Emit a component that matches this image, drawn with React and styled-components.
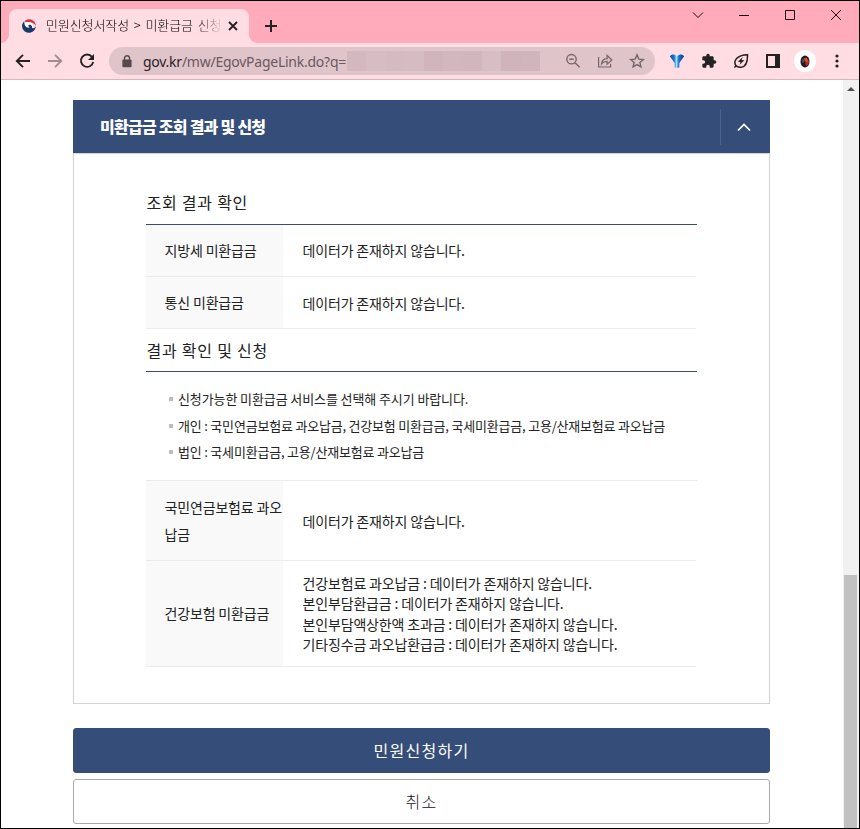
import React, { useState } from "react";
import styled, { createGlobalStyle } from "styled-components";

const localRows = [
  { name: "지방세 미환급금", lines: ["데이터가 존재하지 않습니다."], height: 52, top: 0 },
  { name: "통신 미환급금", lines: ["데이터가 존재하지 않습니다."], height: 52, top: 2 },
];

const notices = [
  { text: "신청가능한 미환급금 서비스를 선택해 주시기 바랍니다.", spacing: -0.1 },
  { text: "개인 : 국민연금보험료 과오납금, 건강보험 미환급금, 국세미환급금, 고용/산재보험료 과오납금", spacing: -0.2 },
  { text: "법인 : 국세미환급금, 고용/산재보험료 과오납금", spacing: -0.2 },
];

const serviceRows = [
  { name: "국민연금보험료 과오납금", lines: ["데이터가 존재하지 않습니다."], height: 80, top: 2 },
  {
    name: "건강보험 미환급금",
    lines: [
      "건강보험료 과오납금 : 데이터가 존재하지 않습니다.",
      "본인부담환급금 : 데이터가 존재하지 않습니다.",
      "본인부담액상한액 초과금 : 데이터가 존재하지 않습니다.",
      "기타징수금 과오납환급금 : 데이터가 존재하지 않습니다.",
    ],
    height: 106,
    top: 0,
  },
];

const mosaic = ["#d3b9bf", "#d6bdc3", "#d4bbc1", "#d5bcc2", "#d0b6bc", "#d2b8be", "#d1b7bd", "#d7bec4", "#cfb4bb", "#d0b6bc"];

function ResultTable({ rows }) {
  return (
    <Table>
      {rows.map((row) => (
        <Row key={row.name} $height={row.height}>
          <RowName>{row.name}</RowName>
          <RowValue $top={row.top}>
            {row.lines.map((line) => (
              <p key={line}>{line}</p>
            ))}
          </RowValue>
        </Row>
      ))}
    </Table>
  );
}

function TabStrip() {
  return (
    <Strip>
      <Tab>
        <svg width="14" height="14" viewBox="0 0 14 14">
          <path d="M3.2 1.600C7-1.200 13.600.8 13.900 6.800C12 4 7.500 2 3 3.600z" fill="#d8324a" />
          <path d="M2.400 2C-1 5-.6 10 2.800 12.600C7.500 15.600 13.600 12.600 13.900 7C13.200 9 11 9.800 10 8.900C10.600 6.800 9 5.200 7.200 5.600C5.500 6 6 8 7.500 8.300C5 9.500 1.500 6.500 2.400 2z" fill="#173a68" />
          <path d="M3 3.600C6 2.400 9.500 3.200 11 5.600C11.300 7 10.800 8.200 10 8.900C10.600 6.800 9 5.200 7.200 5.600C5.600 6 6 8 7.500 8.300C5 9 2.500 6.500 3 3.600z" fill="#fff" />
        </svg>
        <TabTitle>민원신청서작성 &gt; 미환급금 신청</TabTitle>
        <svg width="10" height="10" viewBox="0 0 10 10" stroke="#222" strokeWidth="1.8">
          <path d="M1 1l8 8M9 1L1 9" />
        </svg>
      </Tab>
      <NewTab>
        <svg width="12" height="12" viewBox="0 0 12 12" stroke="#222" strokeWidth="2">
          <path d="M6 0v12M0 6h12" />
        </svg>
      </NewTab>
      <WindowButtons>
        <svg width="12" height="12" viewBox="0 0 12 12"><path d="M1 3.5l5 5 5-5" /></svg>
        <svg width="12" height="12" viewBox="0 0 12 12"><path d="M1 6.5h10" /></svg>
        <svg width="12" height="12" viewBox="0 0 12 12"><path d="M1.5 1.5h9v9h-9z" /></svg>
        <svg width="12" height="12" viewBox="0 0 12 12"><path d="M1 1l10 10M11 1L1 11" /></svg>
      </WindowButtons>
    </Strip>
  );
}

function Toolbar() {
  return (
    <Bar>
      <NavIcons>
        <svg width="16" height="16" viewBox="0 0 16 16" stroke="#222"><path d="M15 8H2M8 1.8L1.8 8 8 14.2" /></svg>
        <svg width="16" height="16" viewBox="0 0 16 16" stroke="#a48d92"><path d="M1 8h13M8 1.8L14.2 8 8 14.2" /></svg>
        <svg width="16" height="16" viewBox="0 0 16 16" stroke="#222">
          <path d="M13 3.8A6.2 6.2 0 1 0 14.2 9" />
          <path d="M15 1v6H9z" fill="#222" stroke="none" />
        </svg>
      </NavIcons>
      <Address>
        <svg width="10" height="13" viewBox="0 0 10 13">
          <path d="M2.5 5V3.3a2.5 2.5 0 0 1 5 0V5" fill="none" stroke="#58494d" strokeWidth="1.4" />
          <rect x=".4" y="4.6" width="9.2" height="7.6" rx="1" fill="#58494d" />
        </svg>
        <Url><b>gov.kr</b>/mw/EgovPageLink.do?q=</Url>
        <Mosaic>
          {mosaic.map((color, i) => (
            <MosaicCell key={i} $color={color} />
          ))}
        </Mosaic>
        <AddressIcons>
          <svg width="16" height="16" viewBox="0 0 16 16"><circle cx="6.5" cy="6.2" r="4.7" /><path d="M10 9.7l4.6 4.6M4.3 6.2h4.4" /></svg>
          <svg width="16" height="16" viewBox="0 0 16 16"><path d="M1.6 4v10h12v-3.2M4.5 10.8c.5-3.7 2.6-5.2 5.6-5.2V2.5l4.8 4.5-4.8 4.2V8.400c-2.700 0-4.200.6-5.600 2.400z" strokeWidth="1.2" /></svg>
          <svg width="16" height="16" viewBox="0 0 16 16"><path d="M8 1.9l1.8 4.2 4.5.4-3.4 3 1 4.4L8 11.6l-3.9 2.3 1-4.4-3.4-3 4.5-.4z" /></svg>
        </AddressIcons>
      </Address>
      <Extensions>
        <svg width="16" height="16" viewBox="0 0 16 16">
          <defs>
            <linearGradient id="gem" x1="0" x2="1">
              <stop offset="0" stopColor="#0d4a98" />
              <stop offset=".3" stopColor="#1676cc" />
              <stop offset=".47" stopColor="#a5e2fc" />
              <stop offset=".62" stopColor="#1873ca" />
              <stop offset="1" stopColor="#08408c" />
            </linearGradient>
          </defs>
          <path d="M.8 3.200Q2.500.8 5 1.600L8 3l3-1.400Q13.500.8 15.200 3.200L10.300 10v4.200q-2.300 1.500-4.600 0V10z" fill="url(#gem)" />
        </svg>
        <svg width="16" height="16" viewBox="0 0 24 24">
          <path fill="#222" d="M20.5 11H19V7c0-1.1-.9-2-2-2h-4V3.5a2.5 2.5 0 0 0-5 0V5H4c-1.1 0-2 .9-2 2v3.8h1.5a2.7 2.7 0 0 1 0 5.4H2V20c0 1.1.9 2 2 2h3.8v-1.5a2.7 2.7 0 0 1 5.4 0V22H17c1.1 0 2-.9 2-2v-4h1.5a2.5 2.5 0 0 0 0-5z" />
        </svg>
        <svg width="16" height="16" viewBox="0 0 16 16">
          <path d="M1.4 14.6l1.7-1.8C-.1 8.5 3.3 2 14.5 1.7c.2 7.5-2.2 12.1-6.3 12.5-1.9.1-3.6-.3-5.1-1.4" fill="none" stroke="#222" strokeWidth="1.5" />
          <path d="M9.7 3.9L4.8 8.7l2.8.4-1.1 3 4.9-4.8-2.8-.4z" fill="#222" />
        </svg>
        <svg width="16" height="16" viewBox="0 0 16 16">
          <path d="M1 1h14v14H1zM3 3v10h7V3z" fill="#222" fillRule="evenodd" />
        </svg>
        <Avatar>
          <svg width="10" height="13" viewBox="0 0 10 13">
            <ellipse cx="5" cy="6.5" rx="4.5" ry="6" fill="#25191d" />
            <path d="M3.5 3.500l3-1L9.200 7 7 9z" fill="#e84b1d" />
            <path d="M5 7.5l3-1 .5 3L6 11z" fill="#b62a20" />
            <path d="M1.5 5l2-1.500 1 3L3 8.500z" fill="#454f6e" />
          </svg>
        </Avatar>
        <svg width="16" height="16" viewBox="0 0 16 16" fill="#222">
          <circle cx="8" cy="3" r="1.6" /><circle cx="8" cy="8" r="1.6" /><circle cx="8" cy="13" r="1.6" />
        </svg>
      </Extensions>
    </Bar>
  );
}

export default function App() {
  const [open, setOpen] = useState(true);

  return (
    <Window>
      <GlobalStyle />
      <TabStrip />
      <Toolbar />
      <Viewport>
        <Page>
          <PanelHeader>
            <PanelTitle>미환급금 조회 결과 및 신청</PanelTitle>
            <FoldButton onClick={() => setOpen(!open)}>
              <svg width="14" height="9" viewBox="0 0 14 9" fill="none" stroke="#fff" strokeWidth="1.7">
                <path d="M1 7.5l6-6 6 6" />
              </svg>
            </FoldButton>
          </PanelHeader>
          {open && (
            <PanelBody>
              <SectionTitle $height={33} $line={20}>조회 결과 확인</SectionTitle>
              <ResultTable rows={localRows} />
              <SectionTitle $height={43} $line={42}>결과 확인 및 신청</SectionTitle>
              <NoticeList>
                {notices.map(({ text, spacing }) => (
                  <Notice key={text} $spacing={spacing}>{text}</Notice>
                ))}
              </NoticeList>
              <ResultTable rows={serviceRows} />
            </PanelBody>
          )}
          <Buttons>
            <Button $primary>민원신청하기</Button>
            <Button>취소</Button>
          </Buttons>
        </Page>
        <Scrollbar>
          <ScrollArrow />
          <ScrollThumb />
        </Scrollbar>
      </Viewport>
    </Window>
  );
}

const GlobalStyle = createGlobalStyle`
  * {
    box-sizing: border-box;
  }
  body {
    margin: 0;
    overflow: hidden;
    font-family: "Noto Sans CJK KR", sans-serif;
    color: #222;
  }
  p, h2, h3, ul {
    margin: 0;
    padding: 0;
  }
  svg {
    display: block;
    flex: none;
  }
`;

const Window = styled.div`
  display: flex;
  flex-direction: column;
  width: 860px;
  height: 829px;
  border: 1px solid #000;
  background: #fff;
`;

const Strip = styled.div`
  display: flex;
  flex: none;
  height: 42px;
  padding: 8px 0 0 8px;
  background: #ffabbb;
`;

const Tab = styled.div`
  position: relative;
  display: flex;
  align-items: center;
  width: 240px;
  height: 34px;
  padding: 0 11px 0 13px;
  border-radius: 8px 8px 0 0;
  background: #ffdde3;

  /* flared feet on both sides of the active tab */
  &::before,
  &::after {
    content: "";
    position: absolute;
    bottom: 0;
    width: 8px;
    height: 8px;
  }
  &::before {
    left: -8px;
    background: radial-gradient(circle at 0 0, transparent 7.5px, #ffdde3 8px);
  }
  &::after {
    right: -8px;
    background: radial-gradient(circle at 100% 0, transparent 7.5px, #ffdde3 8px);
  }
`;

const TabTitle = styled.span`
  flex: 1;
  margin: -2px 8px 0 10px;
  overflow: hidden;
  white-space: nowrap;
  font-size: 13px;
  font-weight: 300;
  line-height: 20px;
  letter-spacing: -0.1px;
  word-spacing: 2px;
  color: #000;
  mask-image: linear-gradient(to right, #000 150px, transparent 178px);
`;

const NewTab = styled.div`
  padding: 11px 0 0 16px;
`;

const WindowButtons = styled.div`
  display: flex;
  gap: 34px;
  margin: 0 17px 0 auto;
  fill: none;
  stroke: #1c0f12;
`;

const Bar = styled.div`
  display: flex;
  flex: none;
  align-items: center;
  height: 37px;
  padding-left: 14px;
  border-bottom: 1px solid #d5b7bd;
  background: #ffdde3;
`;

const NavIcons = styled.div`
  display: flex;
  gap: 16px;
  width: 94px;
  fill: none;
  stroke-width: 1.9;
`;

const Address = styled.div`
  display: flex;
  align-items: center;
  width: 546px;
  height: 28px;
  padding: 0 10px 0 13px;
  border-radius: 14px;
  background: #dfc4ca;
`;

const Url = styled.span`
  width: 204px;
  margin-left: 11px;
  white-space: nowrap;
  font-family: "Noto Sans", sans-serif;
  font-size: 14px;
  letter-spacing: -0.25px;
  color: #6b595e;

  b {
    font-weight: 400;
    color: #2b2124;
  }
`;

const Mosaic = styled.div`
  display: flex;
  width: 193px;
  height: 20px;
`;

const MosaicCell = styled.i`
  flex: 1;
  background: ${({ $color }) => $color};
`;

const AddressIcons = styled.div`
  display: flex;
  gap: 16px;
  margin-left: auto;
  fill: none;
  stroke: #76656a;
  stroke-width: 1.4;
`;

const Extensions = styled.div`
  display: flex;
  align-items: center;
  gap: 16px;
  margin-left: 14px;
`;

const Avatar = styled.div`
  display: flex;
  align-items: center;
  justify-content: center;
  width: 22px;
  height: 22px;
  margin: 0 -3px;
  border-radius: 50%;
  background: #fff;
`;

const Viewport = styled.div`
  display: flex;
  flex: 1;
  min-height: 0;
`;

const Page = styled.main`
  flex: 1;
  padding: 20px 72px 0;
`;

const PanelHeader = styled.div`
  display: flex;
  align-items: center;
  width: 697px;
  height: 53px;
  padding-left: 27px;
  background: #344d79;
`;

const PanelTitle = styled.h2`
  flex: 1;
  margin-top: -2px;
  font-size: 16px;
  font-weight: 900;
  letter-spacing: -0.75px;
  color: #fff;
`;

const FoldButton = styled.button`
  display: flex;
  align-items: center;
  justify-content: center;
  width: 50px;
  height: 36px;
  padding: 2px 4px 0 0;
  border: 0;
  border-left: 1px solid #4b628b;
  background: none;
`;

const PanelBody = styled.div`
  width: 697px;
  height: 551px;
  padding: 38px 72px 0;
  border: 1px solid #d3d3d5;
`;

const SectionTitle = styled.h3`
  height: ${({ $height }) => $height}px;
  padding-left: 0.6px;
  border-bottom: 1px solid #3b4c6b;
  font-size: 16px;
  font-weight: 400;
  line-height: ${({ $line }) => $line}px;
  letter-spacing: 0.75px;
`;

const Table = styled.div`
  font-size: 14px;
  letter-spacing: -0.16px;
`;

const Row = styled.div`
  display: flex;
  width: 550px;
  height: ${({ $height }) => $height}px;
  border-bottom: 1px solid #ebebeb;
`;

const RowName = styled.div`
  display: flex;
  flex: none;
  align-items: center;
  width: 137px;
  padding-left: 18.5px;
  line-height: 27px;
  word-break: break-all;
  background: #f9f9f9;
`;

const RowValue = styled.div`
  display: flex;
  flex-direction: column;
  justify-content: center;
  padding: ${({ $top }) => $top}px 0 0 19.5px;
  line-height: 20.4px;
  white-space: nowrap;
`;

const NoticeList = styled.ul`
  height: 109px;
  padding: 14px 0 0 23px;
  border-bottom: 1px solid #ebebeb;
  list-style: none;
  font-size: 13px;
  line-height: 26.6px;
  white-space: nowrap;
`;

const Notice = styled.li`
  display: flex;
  align-items: center;
  gap: 5px;
  letter-spacing: ${({ $spacing }) => $spacing}px;

  &::before {
    content: "";
    width: 4px;
    height: 4px;
    background: #bdbdbd;
  }
`;

const Buttons = styled.div`
  display: flex;
  flex-direction: column;
  gap: 6px;
  width: 697px;
  margin-top: 24px;
`;

const Button = styled.button`
  height: 45px;
  padding: 0 0 2px;
  border: 1px solid ${({ $primary }) => ($primary ? "#344d79" : "#a9a9ab")};
  border-radius: 3px;
  background: ${({ $primary }) => ($primary ? "#344d79" : "#fff")};
  color: ${({ $primary }) => ($primary ? "#fff" : "#111")};
  font-family: inherit;
  font-size: 16px;
  font-weight: ${({ $primary }) => ($primary ? 400 : 300)};
  letter-spacing: 1.3px;
`;

const Scrollbar = styled.div`
  display: flex;
  flex-direction: column;
  align-items: center;
  width: 16px;
  padding-right: 1px;
  background: #f1f1f1;
`;

const ScrollArrow = styled.i`
  margin-top: 7px;
  border: 4px solid transparent;
  border-top: 0;
  border-bottom-color: #505050;
`;

const ScrollThumb = styled.div`
  width: 13px;
  height: 253px;
  margin-top: auto;
  background: #c1c1c1;
`;
